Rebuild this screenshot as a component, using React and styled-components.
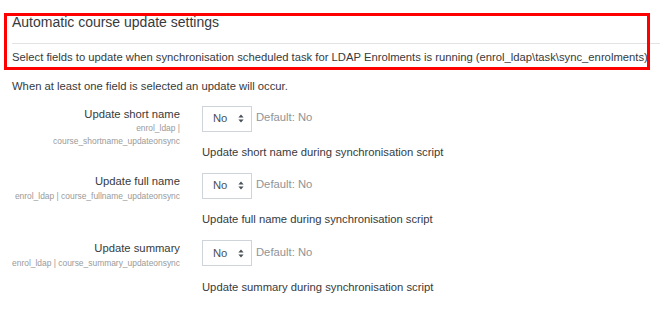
import React from "react";
import styled, { createGlobalStyle } from "styled-components";

const GlobalStyle = createGlobalStyle`
  html, body { margin: 0; padding: 0; background: #fff; }
  body {
    font-family: "Liberation Sans", Arial, sans-serif;
    color: #373a3c;
    font-size: 11.25px;
    line-height: 1.5;
  }
`;

const Page = styled.div`
  position: relative;
  width: 660px;
  height: 318px;
  overflow: hidden;
  padding-left: 12px;
  box-sizing: border-box;
`;

const Highlight = styled.div`
  position: absolute;
  left: 4px;
  top: 13px;
  width: 646px;
  height: 57px;
  border: 3px solid #ff0000;
  box-sizing: border-box;
  pointer-events: none;
`;

const Heading = styled.h3`
  margin: 14px 0 0;
  font-size: 14px;
  font-weight: 400;
  line-height: 1.2;
  color: #373a3c;
`;

const Rule = styled.hr`
  margin: 12px 0 0;
  border: 0;
  height: 1px;
  background: #e3e3e3;
`;

const Intro = styled.p`
  margin: ${(p) => p.$top}px 0 0;
  white-space: nowrap;
`;

const Rows = styled.div`
  margin-top: 11px;
  display: flex;
  flex-direction: column;
  gap: 12.2px;
`;

const Row = styled.div`
  display: flex;
  gap: 22px;
`;

const LabelCol = styled.div`
  width: 168px;
  flex: none;
  text-align: right;
`;

const Label = styled.div`
  color: #373a3c;
`;

const ShortName = styled.div`
  font-size: 8.44px;
  line-height: 1.45;
  color: #9a9a9a;
`;

const SettingCol = styled.div`
  display: flex;
  flex-direction: column;
`;

const Control = styled.div`
  display: flex;
  align-items: flex-start;
`;

const SelectBox = styled.div`
  width: 50px;
  height: 26px;
  box-sizing: border-box;
  border: 1px solid #ced4da;
  display: flex;
  align-items: center;
  padding-left: 10px;
  gap: 11px;
  color: #495057;
  line-height: 1;
`;

const DefaultInfo = styled.span`
  margin-left: 4px;
  padding-top: 3.5px;
  color: #8e9499;
`;

const Description = styled.div`
  margin-top: 12.3px;
`;

const Arrows = () => (
  <svg width="6" height="9" viewBox="0 0 6 9">
    <path d="M3 0.5 L5.6 3.6 H0.4 Z" fill="#495057" />
    <path d="M3 8.5 L5.6 5.4 H0.4 Z" fill="#495057" />
  </svg>
);

const settings = [
  {
    label: "Update short name",
    short: ["enrol_ldap |", "course_shortname_updateonsync"],
    desc: "Update short name during synchronisation script",
  },
  {
    label: "Update full name",
    short: ["enrol_ldap | course_fullname_updateonsync"],
    desc: "Update full name during synchronisation script",
  },
  {
    label: "Update summary",
    short: ["enrol_ldap | course_summary_updateonsync"],
    desc: "Update summary during synchronisation script",
  },
];

export default function App() {
  return (
    <Page>
      <GlobalStyle />
      <Heading>Automatic course update settings</Heading>
      <Rule />
      <Intro $top={5.5}>
        Select fields to update when synchronisation scheduled task for LDAP Enrolments is running
        (enrol_ldap\task\sync_enrolments)
      </Intro>
      <Intro $top={11.5}>When at least one field is selected an update will occur.</Intro>
      <Rows>
        {settings.map((s) => (
          <Row key={s.label}>
            <LabelCol>
              <Label>{s.label}</Label>
              {s.short.map((line) => (
                <ShortName key={line}>{line}</ShortName>
              ))}
            </LabelCol>
            <SettingCol>
              <Control>
                <SelectBox role="listbox">
                  <span>No</span>
                  <Arrows />
                </SelectBox>
                <DefaultInfo>Default: No</DefaultInfo>
              </Control>
              <Description>{s.desc}</Description>
            </SettingCol>
          </Row>
        ))}
      </Rows>
      <Highlight />
    </Page>
  );
}
